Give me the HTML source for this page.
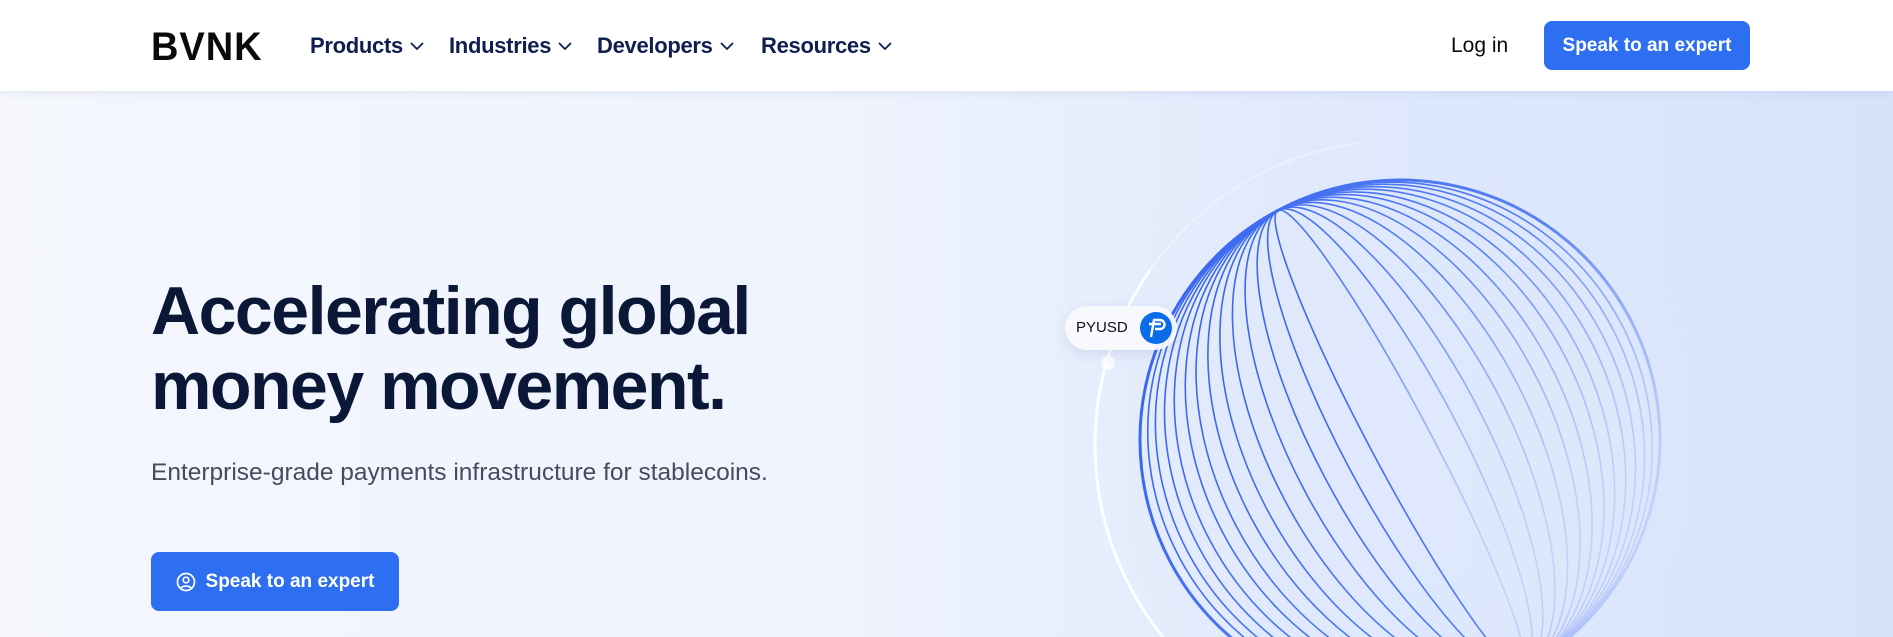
<!DOCTYPE html>
<html style="overflow:hidden"><head><meta charset="utf-8"><style>
*{margin:0;padding:0;box-sizing:border-box}
html,body{width:1893px;height:637px;overflow:hidden}
body{font-family:"Liberation Sans",sans-serif;background:linear-gradient(90deg,#f5f7fd 0%,#eef3fd 45%,#e0e9fc 70%,#d6e3fb 100%);position:relative}
.nav{position:absolute;left:0;top:0;width:1893px;height:91px;background:#fff;box-shadow:0 2px 8px rgba(30,50,120,.08)}
.logo{position:absolute;left:151px;top:25px;font-weight:700;font-size:40px;color:#0a0a0a;letter-spacing:1px;transform:scaleX(.95);transform-origin:left}
.ni{position:absolute;top:33px;font-weight:700;font-size:22px;color:#0f1f4f;letter-spacing:-.3px}
.ni svg{margin-left:7px;vertical-align:3px}
.login{position:absolute;left:1451px;top:34px;font-size:21px;color:#0a0a0a}
.btn{position:absolute;background:#2d6ff0;color:#fff;font-weight:700;border-radius:8px;display:flex;align-items:center;justify-content:center}
h1{position:absolute;left:151px;top:274px;font-size:68px;line-height:75px;letter-spacing:-1.5px;color:#0b1736;font-weight:700}
.sub{position:absolute;left:151px;top:459px;font-size:24.5px;color:#444c5e}
.pill{position:absolute;left:1065px;top:306px;width:112px;height:44px;border-radius:22px;background:rgba(250,250,252,.92);box-shadow:0 4px 12px rgba(80,100,160,.15)}
</style></head><body>
<svg style="position:absolute;left:0;top:0" width="1893" height="637">
<defs>
<linearGradient id="g" x1="0" y1="0" x2="1" y2="1">
<stop offset="0" stop-color="#2f5ff0"/><stop offset=".6" stop-color="#5a82f2"/><stop offset="1" stop-color="#ffffff"/>
</linearGradient>
<radialGradient id="glow" cx=".5" cy=".5" r=".5"><stop offset="0" stop-color="#dfe8fc"/><stop offset="1" stop-color="#dfe8fc" stop-opacity="0"/></radialGradient>
</defs>
<circle cx="1400" cy="430" r="330" fill="url(#glow)"/>
<circle cx="1400" cy="445" r="305" fill="none" stroke="#ffffff" stroke-width="3" stroke-opacity=".9" stroke-dasharray="825 2000" transform="rotate(60 1400 445)"/>
<circle cx="1400" cy="445" r="305" fill="none" stroke="#ffffff" stroke-width="2" stroke-opacity=".35" stroke-dasharray="250 2000" transform="rotate(215 1400 445)"/>
<g fill="none" stroke="url(#g)" stroke-width="1.6" transform="rotate(-28 1400 440)">
<ellipse cx="1400" cy="440" rx="260" ry="260" stroke-width="3"/>
<ellipse cx="1400" cy="440" rx="250" ry="260"/>
<ellipse cx="1400" cy="440" rx="240" ry="260"/>
<ellipse cx="1400" cy="440" rx="228" ry="260"/>
<ellipse cx="1400" cy="440" rx="215" ry="260"/>
<ellipse cx="1400" cy="440" rx="200" ry="260"/>
<ellipse cx="1400" cy="440" rx="185" ry="260"/>
<ellipse cx="1400" cy="440" rx="168" ry="260"/>
<ellipse cx="1400" cy="440" rx="150" ry="260"/>
<ellipse cx="1400" cy="440" rx="130" ry="260"/>
<ellipse cx="1400" cy="440" rx="108" ry="260"/>
<ellipse cx="1400" cy="440" rx="84" ry="260"/>
<ellipse cx="1400" cy="440" rx="58" ry="260"/>
<ellipse cx="1400" cy="440" rx="30" ry="260"/>
</g>
<circle cx="1108" cy="363" r="7" fill="#fff" opacity=".8"/>
</svg>
<div class="nav">
<div class="logo">BVNK</div>
<div class="ni" style="left:310px">Products<svg width="14" height="8" viewBox="0 0 14 8"><path d="M1 1l6 6 6-6" fill="none" stroke="#0f1f4f" stroke-width="1.8"/></svg></div>
<div class="ni" style="left:449px">Industries<svg width="14" height="8" viewBox="0 0 14 8"><path d="M1 1l6 6 6-6" fill="none" stroke="#0f1f4f" stroke-width="1.8"/></svg></div>
<div class="ni" style="left:597px">Developers<svg width="14" height="8" viewBox="0 0 14 8"><path d="M1 1l6 6 6-6" fill="none" stroke="#0f1f4f" stroke-width="1.8"/></svg></div>
<div class="ni" style="left:761px">Resources<svg width="14" height="8" viewBox="0 0 14 8"><path d="M1 1l6 6 6-6" fill="none" stroke="#0f1f4f" stroke-width="1.8"/></svg></div>
<div class="login">Log in</div>
<div class="btn" style="left:1544px;top:21px;width:206px;height:49px;font-size:19px">Speak to an expert</div>
</div>
<h1>Accelerating global<br>money movement.</h1>
<div class="sub">Enterprise-grade payments infrastructure for stablecoins.</div>
<div class="btn" style="left:151px;top:552px;width:248px;height:59px;font-size:19px"><svg width="20" height="20" viewBox="0 0 20 20" style="margin-right:10px"><circle cx="10" cy="10" r="8.5" fill="none" stroke="#fff" stroke-width="1.7"/><circle cx="10" cy="8" r="2.8" fill="none" stroke="#fff" stroke-width="1.7"/><path d="M5 16c1.5-2.5 8.5-2.5 10 0" fill="none" stroke="#fff" stroke-width="1.7"/></svg>Speak to an expert</div>
<div class="pill"><span style="position:absolute;left:11px;top:13px;font-size:15px;color:#111">PYUSD</span>
<svg style="position:absolute;left:74px;top:5px" width="34" height="34" viewBox="0 0 34 34"><circle cx="17" cy="17" r="16" fill="#0a6ce8"/><path d="M12 26l3-17h6a4.5 4.5 0 010 9h-5M10 13h12" fill="none" stroke="#fff" stroke-width="2.4"/></svg></div>
</body></html>
